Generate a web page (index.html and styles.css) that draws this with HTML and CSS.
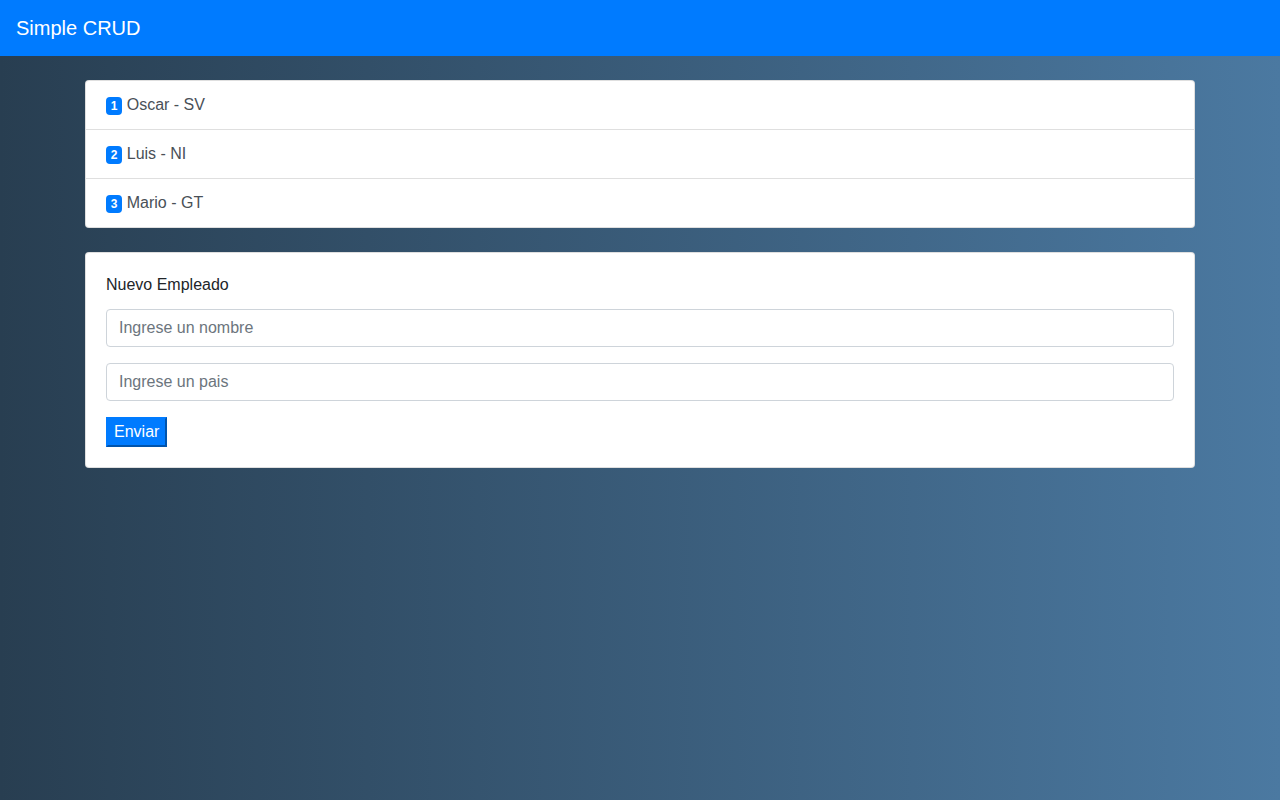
FILE: index.html
```html
<!DOCTYPE html>
<html lang="es">
<head>
<meta charset="utf-8">
<title>Simple CRUD</title>
<link rel="stylesheet" href="styles.css">
</head>
<body>
<nav class="navbar">
  <span class="brand">Simple CRUD</span>
</nav>
<main class="container">
  <ul class="list-group">
    <li class="list-item"><span class="badge">1</span> Oscar - SV</li>
    <li class="list-item"><span class="badge">2</span> Luis - NI</li>
    <li class="list-item"><span class="badge">3</span> Mario - GT</li>
  </ul>
  <section class="card">
    <div class="card-body">
      <p class="card-title">Nuevo Empleado</p>
      <form class="form">
        <div class="form-group"><input class="form-control" type="text" placeholder="Ingrese un nombre"></div>
        <div class="form-group"><input class="form-control" type="text" placeholder="Ingrese un pais"></div>
        <button class="btn" type="button">Enviar</button>
      </form>
    </div>
  </section>
</main>
</body>
</html>
```
FILE: styles.css
```css
* { box-sizing: border-box; }
html, body { height: 100%; }
body {
  margin: 0;
  font-family: "Liberation Sans", Arial, sans-serif;
  font-size: 16px;
  line-height: 1.5;
  color: #212529;
  background: linear-gradient(to right, #283e51, #4b79a1);
  min-height: 800px;
}
.navbar {
  background: #007bff;
  padding: 8px 16px;
  height: 56px;
  display: flex;
  align-items: center;
}
.brand {
  color: #fff;
  font-size: 20px;
  line-height: 30px;
}
.container {
  width: 1140px;
  margin: 0 auto;
  padding: 24px 15px 0;
}
.list-group {
  list-style: none;
  margin: 0;
  padding: 0;
  background: #fff;
  border: 1px solid rgba(0,0,0,.125);
  border-radius: 4px;
}
.list-item {
  padding: 12px 20px;
  color: #495057;
  line-height: 24px;
  border-top: 1px solid rgba(0,0,0,.125);
}
.list-item:first-child { border-top: 0; }
.badge {
  display: inline-block;
  background: #007bff;
  color: #fff;
  font-size: 12px;
  font-weight: 700;
  line-height: 1;
  padding: 3px 4.8px;
  border-radius: 4px;
  vertical-align: baseline;
}
.card {
  margin-top: 24px;
  background: #fff;
  border: 1px solid rgba(0,0,0,.125);
  border-radius: 4px;
}
.card-body { padding: 20px; }
.card-title {
  margin: 0 0 12px;
  line-height: 24px;
  color: #212529;
}
.form-group { margin-bottom: 16px; }
.form-control {
  display: block;
  width: 100%;
  height: 38px;
  padding: 6px 12px;
  font: inherit;
  color: #495057;
  background: #fff;
  border: 1px solid #ced4da;
  border-radius: 4px;
}
.form-control::placeholder { color: #6c757d; opacity: 1; }
.btn {
  font: inherit;
  line-height: 24px;
  color: #fff;
  background: #007bff;
  padding: 1px 6px;
  border-width: 2px;
  border-style: solid;
  border-color: #007bff #0054ad #0054ad #007bff;
  border-radius: 0;
  display: block;
}
```
